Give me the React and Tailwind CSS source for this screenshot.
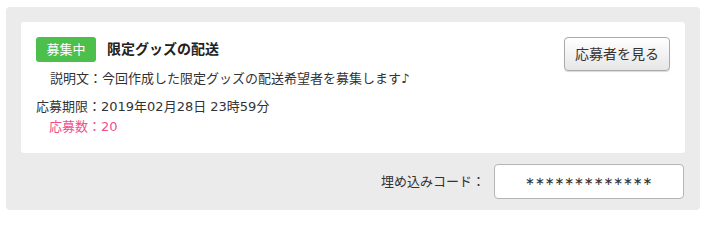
import React from "react";

const font = { fontFamily: '"DejaVu Sans", "Noto Sans CJK JP", sans-serif' };

export default function App() {
  return (
    <div className="w-[706px] h-[217px] bg-white pt-[7px] pl-[6px]" style={font}>
      <div className="w-[694px] h-[203px] rounded-[4px] bg-[#ebebeb] px-[15px] pt-[15px]">
        {/* Card */}
        <div className="flex justify-between h-[131px] rounded-[3px] bg-white pl-[15px] pr-[15px] pt-[15px] text-[13px] text-[#333]">
          <div className="flex flex-col">
            <div className="flex items-center">
              <span className="flex items-center justify-center w-[60px] h-[25px] rounded-[3px] bg-[#4dbf4d] text-white text-[13px]">
                募集中
              </span>
              <span className="ml-[11px] text-[14px] font-bold text-[#222]">限定グッズの配送</span>
            </div>
            <p className="mt-[7px] pl-[14px] leading-[20px]">
              説明文：今回作成した限定グッズの配送希望者を募集します♪
            </p>
            <p className="mt-[8px] leading-[20px]">応募期限：2019年02月28日 23時59分</p>
            <p className="pl-[13px] leading-[20px] text-[#f0508c]">応募数：20</p>
          </div>
          <button className="w-[106px] h-[34px] rounded-[4px] border border-[#aaa] bg-gradient-to-b from-white to-[#e6e6e6] text-[14px] text-[#333] shadow-[0_1px_1px_rgba(0,0,0,0.15)]">
            応募者を見る
          </button>
        </div>

        {/* Embed code */}
        <div className="flex items-center justify-end mt-[11px] pr-px">
          <span className="text-[13px] text-[#333] mr-[9px]">埋め込みコード：</span>
          <div className="flex items-center justify-center w-[190px] h-[35px] rounded-[4px] border border-[#b5b5b5] bg-white text-[11.7px] text-[#333]">
            ∗∗∗∗∗∗∗∗∗∗∗∗∗
          </div>
        </div>
      </div>
    </div>
  );
}
